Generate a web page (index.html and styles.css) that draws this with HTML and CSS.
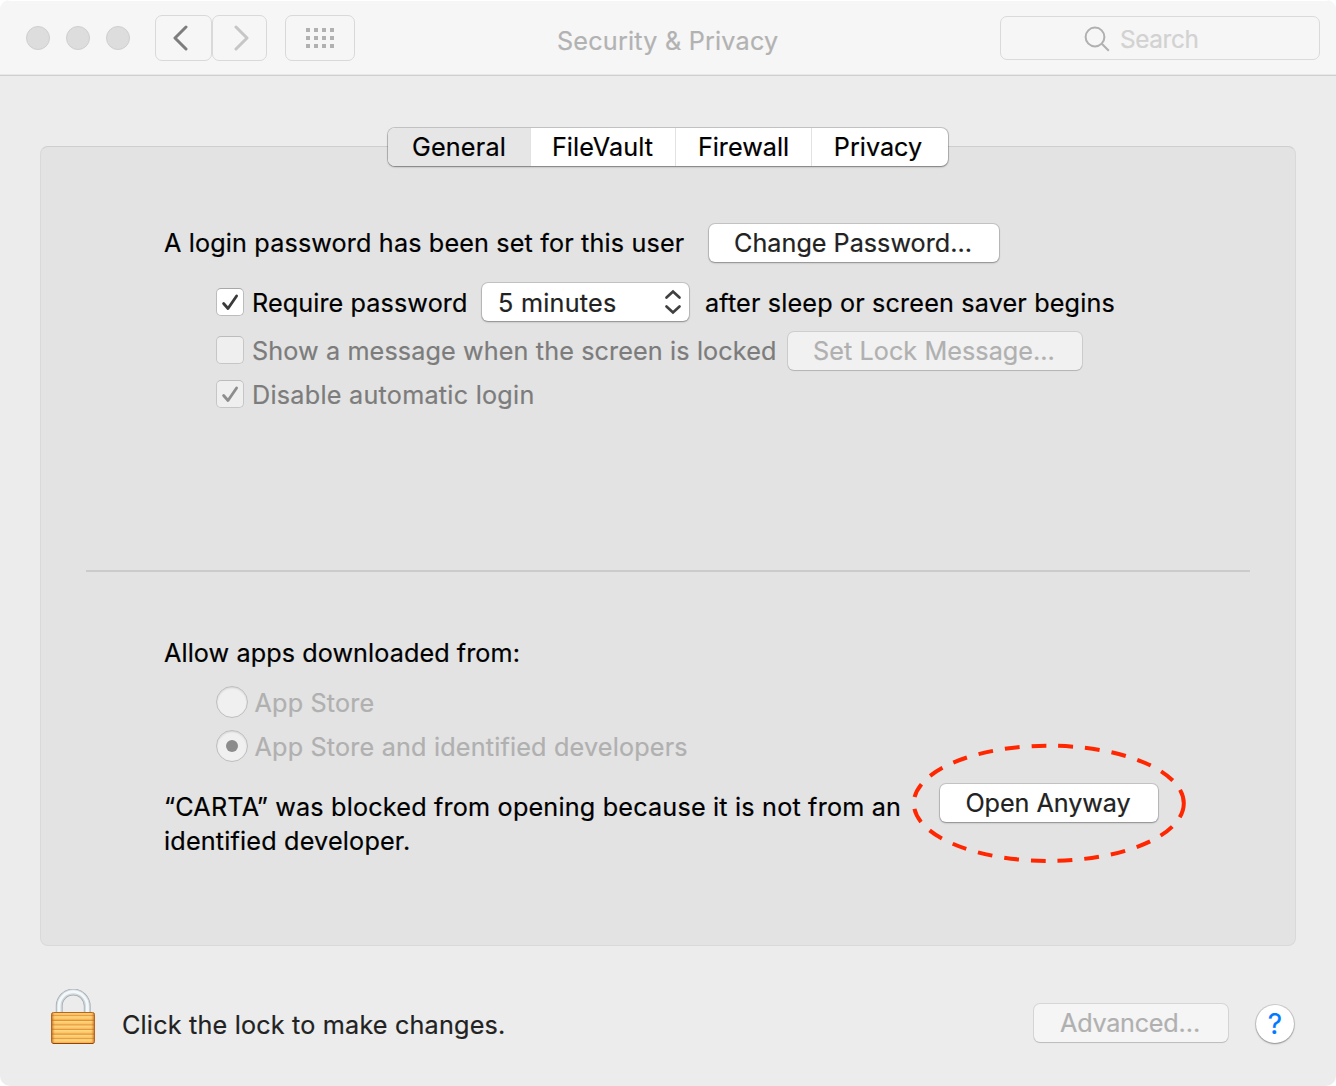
FILE: index.html
```html
<!DOCTYPE html>
<html lang="en">
<head>
<meta charset="utf-8">
<title>Security &amp; Privacy</title>
<link rel="stylesheet" href="styles.css">
</head>
<body>
<div class="window">
  <header class="titlebar">
    <div class="lights"><i class="light"></i><i class="light"></i><i class="light"></i></div>
    <div class="nav">
      <button class="tool back"><svg width="16" height="26" viewBox="0 0 16 26"><path d="M14 2 3 13 14 24" fill="none" stroke="#7d7d7d" stroke-width="3" stroke-linecap="round" stroke-linejoin="round"/></svg></button>
      <button class="tool forward"><svg width="16" height="26" viewBox="0 0 16 26"><path d="M2 2 13 13 2 24" fill="none" stroke="#c6c6c6" stroke-width="3" stroke-linecap="round" stroke-linejoin="round"/></svg></button>
    </div>
    <button class="tool grid"><svg width="28" height="20" viewBox="0 0 28 20" fill="#b1b1b1"><path d="M0 0h4v4H0zM8 0h4v4H8zM16 0h4v4h-4zM24 0h4v4h-4zM0 8h4v4H0zM8 8h4v4H8zM16 8h4v4h-4zM24 8h4v4h-4zM0 16h4v4H0zM8 16h4v4H8zM16 16h4v4h-4zM24 16h4v4h-4z"/></svg></button>
    <h1 class="title">Security &amp; Privacy</h1>
    <div class="search">
      <svg width="26" height="26" viewBox="0 0 26 26" fill="none" stroke="#b0b0b0" stroke-width="2"><circle cx="11" cy="11" r="9.4"/><path d="m17.8 17.8 7 7"/></svg>
      <span class="search-text">Search</span>
    </div>
  </header>

  <nav class="tabs">
    <button class="tab tab-general active">General</button>
    <button class="tab tab-filevault">FileVault</button>
    <button class="tab tab-firewall">Firewall</button>
    <button class="tab tab-privacy">Privacy</button>
  </nav>

  <main class="panel">
    <section class="login">
      <div class="row row-password">
        <span class="lead">A login password has been set for this user</span>
        <button class="btn btn-change">Change Password…</button>
      </div>
      <div class="row row-require">
        <span class="check"><svg width="26" height="26" viewBox="0 0 26 26"><path d="m6.6 14.5 4.4 5L19.6 7" fill="none" stroke="#3a3a3a" stroke-width="2.8" stroke-linecap="round" stroke-linejoin="round"/></svg></span>
        <span class="label label-require">Require password</span>
        <button class="btn select"><span>5 minutes</span><svg width="18" height="26" viewBox="0 0 18 26"><path d="m2.5 8.5 6.5-6 6.5 6M2.5 17.5l6.5 6 6.5-6" fill="none" stroke="#404040" stroke-width="2.7" stroke-linecap="round" stroke-linejoin="miter"/></svg></button>
        <span class="after">after sleep or screen saver begins</span>
      </div>
      <div class="row row-message">
        <span class="check off"></span>
        <span class="label label-message dim">Show a message when the screen is locked</span>
        <button class="btn btn-lock off">Set Lock Message…</button>
      </div>
      <div class="row row-auto">
        <span class="check off"><svg width="26" height="26" viewBox="0 0 26 26"><path d="m6.6 14.5 4.4 5L19.6 7" fill="none" stroke="#8d8d8d" stroke-width="2.8" stroke-linecap="round" stroke-linejoin="round"/></svg></span>
        <span class="label label-auto dim">Disable automatic login</span>
      </div>
    </section>
    <hr class="rule">
    <section class="apps">
      <p class="allow">Allow apps downloaded from:</p>
      <div class="row row-radio"><span class="radio"></span><span class="radio-label">App Store</span></div>
      <div class="row row-radio"><span class="radio on"></span><span class="radio-label">App Store and identified developers</span></div>
      <div class="blocked">
        <p class="notice">“CARTA” was blocked from opening because it is not from an<br>identified developer.</p>
        <div class="open">
          <button class="btn btn-open">Open Anyway</button>
          <svg class="ring" width="278" height="124" viewBox="0 0 278 124"><ellipse cx="138.8" cy="62.3" rx="135" ry="57.6" fill="none" stroke="#ff2600" stroke-width="4" stroke-dasharray="14.8 11.95"/></svg>
        </div>
      </div>
    </section>
  </main>

  <footer class="footer">
    <svg class="lock" width="46" height="58" viewBox="0 0 46 58">
      <defs>
        <linearGradient id="brass" x1="0" y1="0" x2="0" y2="4.6" gradientUnits="userSpaceOnUse" spreadMethod="repeat">
          <stop offset="0" stop-color="#ffd880"/><stop offset=".55" stop-color="#fdc262"/><stop offset=".85" stop-color="#dd9038"/><stop offset="1" stop-color="#ffd880"/>
        </linearGradient>
        <linearGradient id="edge" x1="0" x2="1" y1="0" y2="0">
          <stop offset="0" stop-color="#a04a08" stop-opacity=".7"/><stop offset=".08" stop-color="#d98020" stop-opacity="0"/><stop offset=".92" stop-color="#d98020" stop-opacity="0"/><stop offset="1" stop-color="#a04a08" stop-opacity=".7"/>
        </linearGradient>
      </defs>
      <path d="M9.2 26V17a14 14 0 0 1 28 0v9" fill="none" stroke="#a0a7ab" stroke-width="6.8"/>
      <path d="M9.2 26V17a14 14 0 0 1 28 0v9" fill="none" stroke="#ced7dc" stroke-width="5.4"/>
      <path d="M9 26V17a14.2 14.2 0 0 1 28.4 0v9" fill="none" stroke="#f4f8fa" stroke-width="3"/>
      <rect x="1.5" y="23.5" width="43" height="31" rx="2" fill="url(#brass)"/>
      <rect x="1.5" y="23.5" width="43" height="31" rx="2" fill="url(#edge)" stroke="#b5651c"/>
      <path d="M3 54.5h40" stroke="#944408"/>
    </svg>
    <span class="hint">Click the lock to make changes.</span>
    <button class="btn btn-advanced off">Advanced…</button>
    <button class="btn help">?</button>
  </footer>
</div>
</body>
</html>
```
FILE: styles.css
```css
* { box-sizing: border-box; }

body {
  margin: 0;
  background: #fff;
  font-family: Inter, "Liberation Sans", sans-serif;
  font-size: 25.2px;
  line-height: 34px;
  color: #000;
  -webkit-text-stroke: .2px currentColor;
}

button {
  font: inherit;
  color: inherit;
  border: 0;
  margin: 0;
  padding: 0;
  background: none;
}

svg { display: block; flex: none; }
p, h1 { margin: 0; }
span { white-space: nowrap; }

.window {
  display: flex;
  flex-direction: column;
  width: 1336px;
  height: 1086px;
  background: #ececec;
  border-radius: 10px;
  overflow: hidden;
}

/* Title bar */
.titlebar {
  flex: none;
  display: flex;
  align-items: flex-start;
  height: 76px;
  background: #f6f6f6;
  border-bottom: 1px solid #cfcfcf;
  box-shadow: inset 0 1px #fff, inset 0 -1px #e8e8e8;
}
.lights { display: flex; gap: 16px; padding: 26px 0 0 26px; }
.light {
  width: 24px;
  height: 24px;
  border-radius: 50%;
  background: #dddddd;
  border: 1px solid #cfcfcf;
}
.nav { display: flex; padding: 15px 0 0 25px; }
.tool {
  display: flex;
  align-items: center;
  justify-content: center;
  height: 46px;
  border: 1px solid #d9d9d9;
  border-radius: 7px;
}
.back { width: 57px; padding-right: 7px; }
.forward { width: 55px; padding-left: 4px; }
.grid { width: 70px; margin: 15px 0 0 18px; }
.title {
  flex: 1;
  padding: 24px 0 0 202px;
  font-size: 25.2px;
  font-weight: 400;
  letter-spacing: .205px;
  color: #b2b2b2;
}
.search {
  display: flex;
  align-items: center;
  width: 320px;
  height: 44px;
  margin: 16px 16px 0 0;
  padding: 2px 0 0 83px;
  border: 1px solid #dadada;
  border-radius: 7px;
  color: #d2d2d2;
}
.search-text { margin-left: 10px; font-size: 24.4px; letter-spacing: -.4px; }

/* Tabs straddle the panel's top edge */
.tabs {
  position: relative;
  flex: none;
  align-self: center;
  display: flex;
  height: 38px;
  margin: 52px 0 -20px;
  border-radius: 7px;
  background: #fff;
  box-shadow: 0 0 0 1px rgba(0, 0, 0, .17), 0 1px 2px rgba(0, 0, 0, .35);
}
.tab { display: flex; align-items: center; justify-content: center; }
.tab + .tab { border-left: 1px solid #e2e2e2; }
.tab-general { width: 142px; letter-spacing: .2px; }
.tab-filevault { width: 145px; padding-right: 1px; letter-spacing: .1px; }
.tab-firewall { width: 136px; }
.tab-privacy { width: 137px; padding-right: 4px; }
.tab.active { background: #e6e6e6; border-radius: 7px 0 0 7px; }

/* Panel */
.panel {
  flex: none;
  width: 1256px;
  height: 800px;
  margin: 0 40px;
  padding: 77px 45px 0;
  background: #e3e3e3;
  border: 1px solid #d9d9d9;
  border-top-color: #cecece;
  border-radius: 8px;
}
.login { height: 346px; }
.row { display: flex; align-items: center; }

.btn {
  flex: none;
  display: flex;
  align-items: center;
  justify-content: center;
  height: 38px;
  border-radius: 6px;
  background: #fff;
  color: #222;
  box-shadow: 0 0 0 1px rgba(0, 0, 0, .13), 0 1px 2px rgba(0, 0, 0, .3);
}
.btn.off {
  background: #f1f1f1;
  color: #b0b0b0;
  box-shadow: 0 0 0 1px rgba(0, 0, 0, .09), 0 1px 1px rgba(0, 0, 0, .13);
}

.row-password { height: 38px; padding-left: 78px; }
.lead { width: 545px; letter-spacing: .145px; }
.btn-change { width: 290px; padding-right: 2px; }

.row-require { height: 38px; margin-top: 21px; padding-left: 130px; }
.row-message { height: 38px; margin-top: 11px; padding-left: 130px; }
.row-auto { height: 38px; margin-top: 5px; padding-left: 130px; }
.row-message .check { margin-bottom: 2px; }

.check {
  flex: none;
  width: 28px;
  height: 28px;
  border: 1px solid #bcbcbc;
  border-top-color: #a8a8a8;
  border-radius: 5px;
  background: #fff;
}
.check.off { background: #efefef; border-color: #c6c6c6; border-top-color: #bcbcbc; }
.label { margin-left: 8px; }
.label-require { width: 230px; padding-top: 2px; letter-spacing: .1px; }
.label-message { width: 536px; letter-spacing: .116px; }
.label-auto { padding-top: 2px; letter-spacing: .25px; }
.dim { color: #7c7c7c; }
.select { width: 207px; padding: 0 7px 0 16px; justify-content: space-between; letter-spacing: .248px; }
.select span { padding-top: 2px; }
.after { margin-left: 16px; padding-top: 2px; letter-spacing: .155px; }
.btn-lock { width: 294px; padding-right: 2px; letter-spacing: .056px; }

.rule { height: 2px; margin: 0; border: 0; background: #cbcbcb; }

.apps { padding-top: 64px; }
.allow { height: 50px; padding-left: 78px; letter-spacing: .08px; }
.row-radio { height: 32px; margin-bottom: 12px; padding-left: 130px; color: #b0b0b0; }
.radio {
  display: flex;
  align-items: center;
  justify-content: center;
  width: 32px;
  height: 32px;
  border: 1px solid #bebebe;
  border-radius: 50%;
  background: #f0f0f0;
  box-shadow: inset 0 1px 2px rgba(0, 0, 0, .12);
}
.radio.on::after {
  content: "";
  width: 12px;
  height: 12px;
  border-radius: 50%;
  background: #8c8c8c;
}
.radio-label { margin-left: 6.5px; padding-top: 2px; letter-spacing: .18px; }
.blocked { display: flex; padding: 10px 0 0 78px; margin-top: 6px; }
.notice { width: 776px; padding-top: 6px; letter-spacing: .187px; }
.open { position: relative; height: 38px; }
.btn-open { width: 218px; padding-right: 2px; letter-spacing: -.07px; }
.ring { position: absolute; left: -30px; top: -43px; }

/* Footer */
.footer { display: flex; height: 140px; padding: 43px 42px 0 50px; }
.hint { width: 912px; margin: 19px 0 0 26px; color: #222; letter-spacing: .185px; }
.btn-advanced { width: 194px; margin-top: 15px; padding-right: 2px; letter-spacing: -.25px; }
.btn-advanced.off { background: #f5f5f5; }
.help {
  width: 38px;
  margin: 16px 0 0 28px;
  border-radius: 50%;
  color: #007aff;
  font-size: 28px;
}
```
